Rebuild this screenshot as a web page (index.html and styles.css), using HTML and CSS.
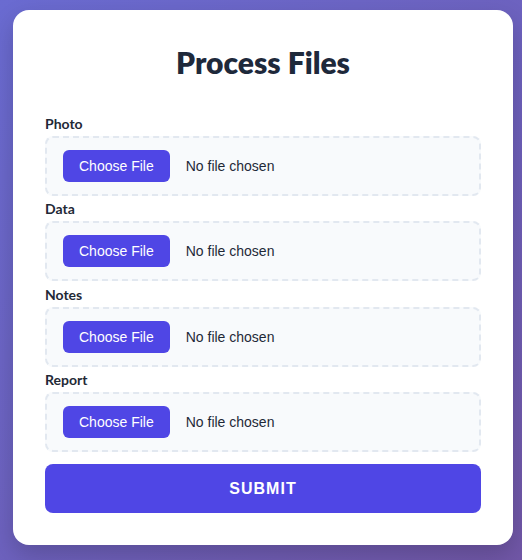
FILE: index.html
```html
<!DOCTYPE html>
<html lang="en">
<head>
<meta charset="utf-8">
<title>Process Files</title>
<link rel="stylesheet" href="styles.css">
</head>
<body>
<form class="card">
  <h1 class="title">Process Files</h1>
  <div class="group">
    <div class="label">Photo</div>
    <label class="drop"><span class="btn">Choose File</span><span class="status">No file chosen</span><input class="hidden" type="file"></label>
  </div>
  <div class="group">
    <div class="label">Data</div>
    <label class="drop"><span class="btn">Choose File</span><span class="status">No file chosen</span><input class="hidden" type="file"></label>
  </div>
  <div class="group">
    <div class="label">Notes</div>
    <label class="drop"><span class="btn">Choose File</span><span class="status">No file chosen</span><input class="hidden" type="file"></label>
  </div>
  <div class="group">
    <div class="label">Report</div>
    <label class="drop"><span class="btn">Choose File</span><span class="status">No file chosen</span><input class="hidden" type="file"></label>
  </div>
  <button class="submit" type="button">SUBMIT</button>
</form>
</body>
</html>
```
FILE: styles.css
```css
html, body {
  margin: 0;
  padding: 0;
}
body {
  min-height: 560px;
  background: linear-gradient(135deg, #6a6bd1 0%, #6d62bf 50%, #7157a7 100%);
  padding: 10px 9px 15px 13px;
  box-sizing: border-box;
  font-family: Lato, "Noto Sans", sans-serif;
}
.card {
  width: 500px;
  box-sizing: border-box;
  background: #ffffff;
  border-radius: 16px;
  padding: 32px;
  box-shadow: 0 10px 25px rgba(0, 0, 0, 0.18);
  display: flex;
  flex-direction: column;
}
.title {
  margin: 0 0 34px;
  text-align: center;
  font-family: Lato, sans-serif;
  font-weight: 800;
  font-size: 30px;
  line-height: 40px;
  color: #1e293b;
}
.group {
  display: flex;
  flex-direction: column;
  margin-bottom: 5.33px;
}
.label {
  font-size: 14px;
  font-weight: 700;
  line-height: 16px;
  color: #1f2937;
  margin-bottom: 4px;
}
.drop {
  display: flex;
  align-items: center;
  gap: 16px;
  height: 60px;
  box-sizing: border-box;
  padding: 0 16px;
  border: 2px dashed #e2e8f0;
  border-radius: 8px;
  background: #f8fafc;
  font-family: "Liberation Sans", Arial, sans-serif;
  font-size: 14px;
  cursor: pointer;
}
.btn {
  display: flex;
  align-items: center;
  height: 32px;
  padding: 0 16px;
  background: #4f46e5;
  color: #ffffff;
  border-radius: 6px;
}
.status {
  color: #1f2937;
}
.hidden {
  display: none;
}
.submit {
  margin-top: 6.5px;
  height: 49.5px;
  border: none;
  border-radius: 8px;
  background: #4f46e5;
  color: #ffffff;
  font-family: "Liberation Sans", Arial, sans-serif;
  font-weight: 700;
  font-size: 16px;
  letter-spacing: 1px;
  cursor: pointer;
}
```
